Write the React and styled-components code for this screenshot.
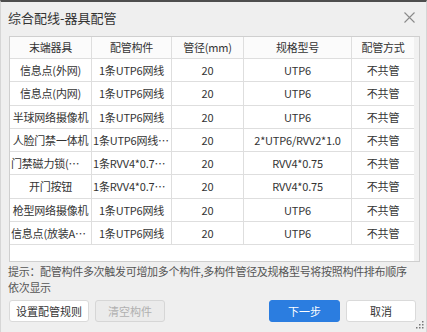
import React from "react";
import styled, { createGlobalStyle } from "styled-components";

const Global = createGlobalStyle`
  html, body { margin: 0; padding: 0; background: #efefef; }
  * { box-sizing: border-box; }
  body { font-family: "Microsoft YaHei", "Noto Sans CJK SC", sans-serif; }
`;

const Dialog = styled.div`
  width: 427px;
  height: 332px;
  background: #efefef;
  border-top: 2px solid #4e4e4e;
  border-left: 1px solid #d6d6d6;
  border-right: 1px solid #d6d6d6;
  display: flex;
  flex-direction: column;
  position: relative;
  color: #333;
`;

const Header = styled.div`
  height: 30px;
  display: flex;
  align-items: center;
  justify-content: space-between;
  padding: 0 11px 0 7px;
`;

const Title = styled.div`
  font-size: 13px;
  color: #333;
  line-height: 1;
`;

const Close = styled.button`
  width: 12px;
  height: 12px;
  padding: 0;
  border: 0;
  background: none;
  display: flex;
  align-items: center;
  justify-content: center;
`;

const TableBox = styled.div`
  margin: 4px 0 0 8px;
  width: 411px;
  height: 226px;
  border: 1px solid #cfcfcf;
  display: flex;
  background: #f1f1f1;
`;

const TableArea = styled.div`
  width: 404px;
  background: #fff;
  display: flex;
  flex-direction: column;
`;

const Gutter = styled.div`
  flex: 1;
  background: #f1f1f1;
`;

const Row = styled.div`
  display: grid;
  grid-template-columns: 82px 80px 72px 108px 62px;
  height: ${(p) => (p.$head ? "22px" : "23.3px")};
  border-bottom: 1px solid #dedede;
  background: ${(p) => (p.$head ? "#fbfbfb" : "#fff")};
`;

const Cell = styled.div`
  border-right: 1px solid #dedede;
  font-size: 11px;
  letter-spacing: -0.2px;
  color: #333;
  text-align: center;
  white-space: nowrap;
  overflow: hidden;
  text-overflow: ellipsis;
  padding: 0 1px;
  display: block;
  line-height: ${(p) => (p.$head ? "21px" : "22px")};
  &:last-child { border-right: 0; }
`;

const Hint = styled.div`
  margin-top: 1px;
  padding: 0 16px 0 7px;
  font-size: 11px;
  letter-spacing: -0.3px;
  line-height: 16px;
  color: #555;
`;

const Footer = styled.div`
  margin-top: 5px;
  padding: 0 10px 0 8px;
  display: flex;
  align-items: center;
`;

const Group = styled.div`
  display: flex;
  gap: 6px;
  margin-left: ${(p) => (p.$right ? "auto" : "0")};
`;

const Btn = styled.button`
  height: 22px;
  width: ${(p) => p.$w}px;
  padding: 0;
  border-radius: 3px;
  font-family: inherit;
  font-size: 11px;
  border: 1px solid ${(p) =>
    p.$primary ? "#2b7de0" : p.disabled ? "#d6d6d6" : "#dadada"};
  background: ${(p) =>
    p.$primary ? "#2b7de0" : p.disabled ? "#ebebeb" : "#fff"};
  color: ${(p) => (p.$primary ? "#fff" : p.disabled ? "#b0b0b0" : "#333")};
`;

const Grip = styled.svg`
  position: absolute;
  right: 2px;
  bottom: 3px;
`;

const rows = [
  ["信息点(外网)", "1条UTP6网线", "20", "UTP6", "不共管"],
  ["信息点(内网)", "1条UTP6网线", "20", "UTP6", "不共管"],
  ["半球网络摄像机", "1条UTP6网线", "20", "UTP6", "不共管"],
  ["人脸门禁一体机", "1条UTP6网线,1条RVV2*1.0", "20", "2*UTP6/RVV2*1.0", "不共管"],
  ["门禁磁力锁(单门)", "1条RVV4*0.75电源线", "20", "RVV4*0.75", "不共管"],
  ["开门按钮", "1条RVV4*0.75信号线", "20", "RVV4*0.75", "不共管"],
  ["枪型网络摄像机", "1条UTP6网线", "20", "UTP6", "不共管"],
  ["信息点(放装AP面板)", "1条UTP6网线", "20", "UTP6", "不共管"],
];

const heads = ["末端器具", "配管构件", "管径(mm)", "规格型号", "配管方式"];

export default function App() {
  return (
    <>
      <Global />
      <Dialog>
        <Header>
          <Title>综合配线-器具配管</Title>
          <Close aria-label="关闭">
            <svg width="11" height="11" viewBox="0 0 11 11">
              <path d="M0.5 0.5 L10.5 10.5 M10.5 0.5 L0.5 10.5" stroke="#8a8a8a" strokeWidth="1.1" />
            </svg>
          </Close>
        </Header>
        <TableBox>
          <TableArea>
            <Row $head>
              {heads.map((h) => (
                <Cell key={h} $head>{h}</Cell>
              ))}
            </Row>
            {rows.map((r, i) => (
              <Row key={i}>
                {r.map((c, j) => (
                  <Cell key={j}>{c}</Cell>
                ))}
              </Row>
            ))}
          </TableArea>
          <Gutter />
        </TableBox>
        <Hint>
          提示：配管构件多次触发可增加多个构件,多构件管径及规格型号将按照构件排布顺序依次显示
        </Hint>
        <Footer>
          <Group>
            <Btn $w={80}>设置配管规则</Btn>
            <Btn $w={70} disabled>清空构件</Btn>
          </Group>
          <Group $right>
            <Btn $w={71} $primary>下一步</Btn>
            <Btn $w={70}>取消</Btn>
          </Group>
        </Footer>
        <Grip width="8" height="8" viewBox="0 0 8 8">
          <rect x="6" y="0" width="1.5" height="1.5" fill="#777" />
          <rect x="3" y="3" width="1.5" height="1.5" fill="#777" />
          <rect x="6" y="3" width="1.5" height="1.5" fill="#777" />
          <rect x="0" y="6" width="1.5" height="1.5" fill="#777" />
          <rect x="3" y="6" width="1.5" height="1.5" fill="#777" />
          <rect x="6" y="6" width="1.5" height="1.5" fill="#777" />
        </Grip>
      </Dialog>
    </>
  );
}
